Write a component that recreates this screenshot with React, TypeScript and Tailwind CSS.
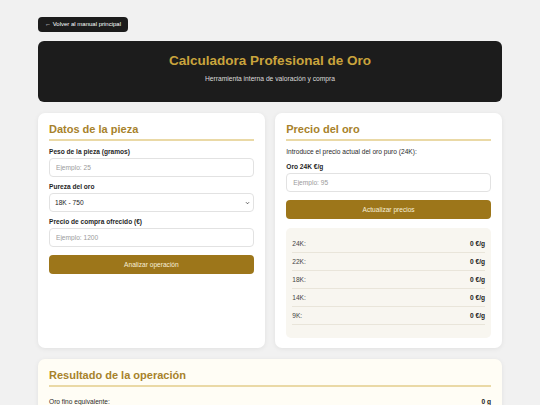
import { useState } from "react";

const font = { fontFamily: '"Liberation Sans", Arial, sans-serif' };

function Heading({ children }: { children: React.ReactNode }) {
  return (
    <h2 className="border-b-2 border-[#ead9a6] pb-[3px] text-[11px] font-bold leading-[13px] text-[#a7822b]">
      {children}
    </h2>
  );
}

function Label({ children }: { children: React.ReactNode }) {
  return (
    <label className="mb-[2px] block text-[6.6px] font-bold leading-[9px] text-[#1f1f1f]">
      {children}
    </label>
  );
}

function Field({ placeholder }: { placeholder: string }) {
  return (
    <input
      placeholder={placeholder}
      className="block h-[19px] w-full rounded-[4px] border border-[#e2e2e2] bg-white px-[6px] text-[6.6px] text-[#222] outline-none placeholder:text-[#9a9a9a]"
    />
  );
}

function GoldButton({ children }: { children: React.ReactNode }) {
  return (
    <button
      type="button"
      className="flex h-[19px] w-full items-center justify-center rounded-[4px] bg-[#9d761a] text-[6.6px] text-[#f7efd8]"
    >
      {children}
    </button>
  );
}

const karats = ["24K", "22K", "18K", "14K", "9K"];

export default function App() {
  const [purity, setPurity] = useState("750");

  return (
    <div style={font} className="min-h-[405px] bg-[#f1f1f1] px-[38px] pt-[17px] pb-[20px]">
      <button
        type="button"
        className="flex h-[15px] items-center rounded-[4px] bg-[#1c1c1c] px-[7px] text-[6px] text-white"
      >
        ← Volver al manual principal
      </button>

      <header className="mt-[9px] flex h-[61px] flex-col items-center rounded-[6px] bg-[#1c1c1c] pt-[12px]">
        <h1 className="text-[13.5px] font-bold leading-[16px] text-[#caa43c]">
          Calculadora Profesional de Oro
        </h1>
        <p className="mt-[6px] text-[6.7px] leading-[8px] text-[#dcdcdc]">
          Herramienta interna de valoración y compra
        </p>
      </header>

      <div className="mt-[11px] grid grid-cols-2 gap-[10.5px]">
        {/* Datos de la pieza */}
        <section className="h-[235px] rounded-[7px] bg-white px-[11px] pt-[10px] shadow-[0_1px_5px_rgba(0,0,0,0.07)]">
          <Heading>Datos de la pieza</Heading>
          <div className="mt-[6px] flex flex-col">
            <div className="mb-[5px]">
              <Label>Peso de la pieza (gramos)</Label>
              <Field placeholder="Ejemplo: 25" />
            </div>
            <div className="mb-[5px]">
              <Label>Pureza del oro</Label>
              <div className="relative">
                <select
                  value={purity}
                  onChange={(e) => setPurity(e.target.value)}
                  className="block h-[19px] w-full appearance-none rounded-[4px] border border-[#e2e2e2] bg-white px-[5px] text-[6.6px] text-[#222] outline-none"
                >
                  <option value="999">24K - 999</option>
                  <option value="916">22K - 916</option>
                  <option value="750">18K - 750</option>
                  <option value="585">14K - 585</option>
                  <option value="375">9K - 375</option>
                </select>
                <svg
                  viewBox="0 0 10 10"
                  className="pointer-events-none absolute right-[4px] top-1/2 h-[5px] w-[5px] -translate-y-1/2"
                >
                  <path d="M2 3.5 5 6.5 8 3.5" fill="none" stroke="#333" strokeWidth="1.6" />
                </svg>
              </div>
            </div>
            <div>
              <Label>Precio de compra ofrecido (€)</Label>
              <Field placeholder="Ejemplo: 1200" />
            </div>
            <div className="mt-[8px]">
              <GoldButton>Analizar operación</GoldButton>
            </div>
          </div>
        </section>

        {/* Precio del oro */}
        <section className="h-[235px] rounded-[7px] bg-white px-[11px] pt-[10px] shadow-[0_1px_5px_rgba(0,0,0,0.07)]">
          <Heading>Precio del oro</Heading>
          <p className="mt-[6px] text-[6.6px] leading-[9px] text-[#2a2a2a]">
            Introduce el precio actual del oro puro (24K):
          </p>
          <div className="mt-[6px]">
            <Label>Oro 24K €/g</Label>
            <Field placeholder="Ejemplo: 95" />
          </div>
          <div className="mt-[8px]">
            <GoldButton>Actualizar precios</GoldButton>
          </div>
          <div className="mt-[9px] h-[110px] rounded-[5px] bg-[#f8f6f0] px-[6px] pt-[7px]">
            {karats.map((k) => (
              <div
                key={k}
                className="flex h-[18px] items-center justify-between border-b border-[#e9e5da] text-[6.6px]"
              >
                <span className="text-[#444]">{k}:</span>
                <span className="font-bold text-[#222]">0 €/g</span>
              </div>
            ))}
          </div>
        </section>
      </div>

      {/* Resultado */}
      <section className="mt-[11px] rounded-[7px] bg-[#fffdf5] px-[11px] pt-[10px] pb-[12px] shadow-[0_1px_5px_rgba(0,0,0,0.07)]">
        <Heading>Resultado de la operación</Heading>
        <div className="mt-[10px] flex items-center justify-between text-[6.6px] leading-[9px]">
          <span className="text-[#2a2a2a]">Oro fino equivalente:</span>
          <span className="font-bold text-[#222]">0 g</span>
        </div>
      </section>
    </div>
  );
}
